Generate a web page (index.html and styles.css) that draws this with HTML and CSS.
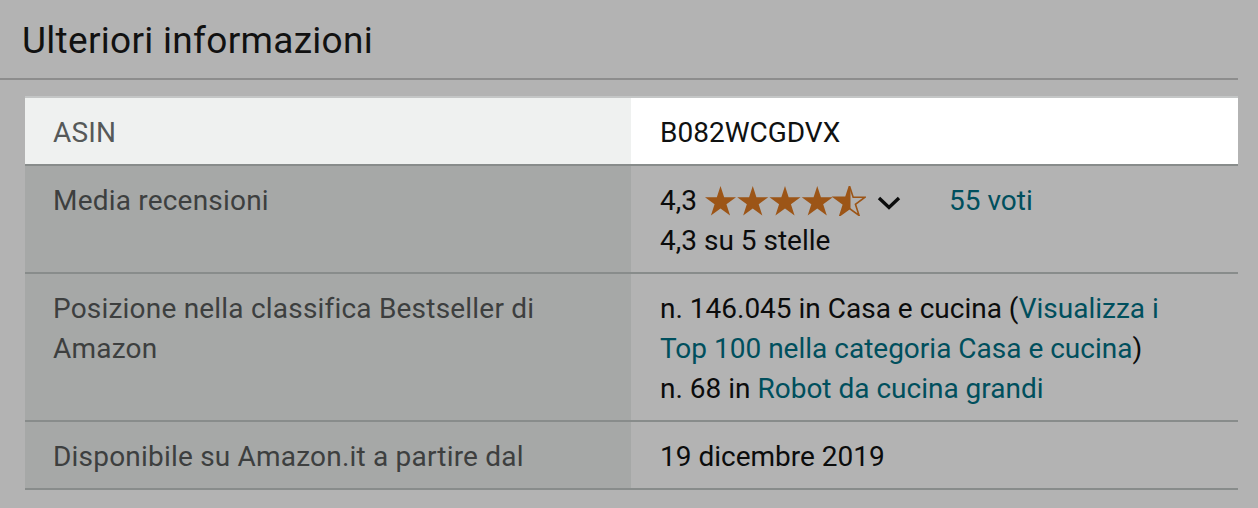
FILE: index.html
```html
<!DOCTYPE html>
<html lang="it">
<head>
<meta charset="utf-8">
<title>Ulteriori informazioni</title>
<link rel="stylesheet" href="styles.css">
</head>
<body>
<div class="header">
  <h2 class="title">Ulteriori informazioni</h2>
</div>
<div class="details">
  <div class="row hl">
    <div class="k">ASIN</div>
    <div class="v">B082WCGDVX</div>
  </div>
  <div class="row">
    <div class="k">Media recensioni</div>
    <div class="v">
      <div class="rating"><span>4,3</span><svg class="stars" width="161" height="30" viewBox="0 0 161 30">
          <defs>
            <polygon id="star" points="15.5,0 19.16,11.26 31,11.26 21.43,18.23 25.08,29.49 15.5,22.53 5.92,29.49 9.57,18.23 0,11.26 11.84,11.26"/>
            <clipPath id="half"><rect x="129" y="0" width="16.5" height="30"/></clipPath>
          </defs>
          <use href="#star" x="0" fill="#9c5517"/>
          <use href="#star" x="32.25" fill="#9c5517"/>
          <use href="#star" x="64.5" fill="#9c5517"/>
          <use href="#star" x="96.75" fill="#9c5517"/>
          <use href="#star" x="129" fill="none" stroke="#9c5517" stroke-width="1.6" stroke-linejoin="miter"/>
          <g clip-path="url(#half)"><use href="#star" x="129" fill="#9c5517"/></g>
        </svg><svg class="chev" width="24" height="14" viewBox="0 0 24 14"><path d="M2 2 L12 11.5 L22 2" fill="none" stroke="#0b0c0c" stroke-width="3.4"/></svg><a class="link votes" href="#">55 voti</a></div>
      <div>4,3 su 5 stelle</div>
    </div>
  </div>
  <div class="row">
    <div class="k">Posizione nella classifica Bestseller di Amazon</div>
    <div class="v">
      <div>n. 146.045 in Casa e cucina (<a class="link" href="#">Visualizza i Top 100 nella categoria Casa e cucina</a>)</div>
      <div>n. 68 in <a class="link" href="#">Robot da cucina grandi</a></div>
    </div>
  </div>
  <div class="row">
    <div class="k">Disponibile su Amazon.it a partire dal</div>
    <div class="v">19 dicembre 2019</div>
  </div>
</div>
</body>
</html>
```
FILE: styles.css
```css
body {
  margin: 0;
  background: #b3b3b3;
  font-family: Roboto, "Liberation Sans", sans-serif;
  color: #0b0c0c;
}

.header {
  margin-right: 20px;
  padding: 19px 0 15px 22px;
  border-bottom: 2px solid #8d8d8d;
}

.title {
  margin: 0;
  font-size: 37px;
  line-height: 44px;
  letter-spacing: 0.3px;
  font-weight: 400;
  color: #111;
}

.details {
  margin: 16px 20px 0 25px;
  font-size: 28px;
  line-height: 40px;
}

.row {
  display: grid;
  grid-template-columns: 606px 1fr;
  border-bottom: 2px solid #888c8b;
}

.row.hl {
  border-top: 2px solid #c4c6c6;
}

.k {
  padding: 15px 40px 11px 28px;
  background: #a6a8a7;
  color: #3d3f3f;
  letter-spacing: 0.2px;
}

.v {
  padding: 15px 40px 11px 29px;
  color: #0b0c0c;
}

.hl .k {
  background: #eff1f0;
  color: #565959;
}

.hl .v {
  background: #ffffff;
  color: #0f1111;
}

.link {
  color: #004f5d;
  text-decoration: none;
}

.stars {
  vertical-align: -6px;
  margin-left: 8px;
}

.chev {
  vertical-align: 0;
  margin-left: 11px;
}

.votes {
  margin-left: 48px;
}
```
